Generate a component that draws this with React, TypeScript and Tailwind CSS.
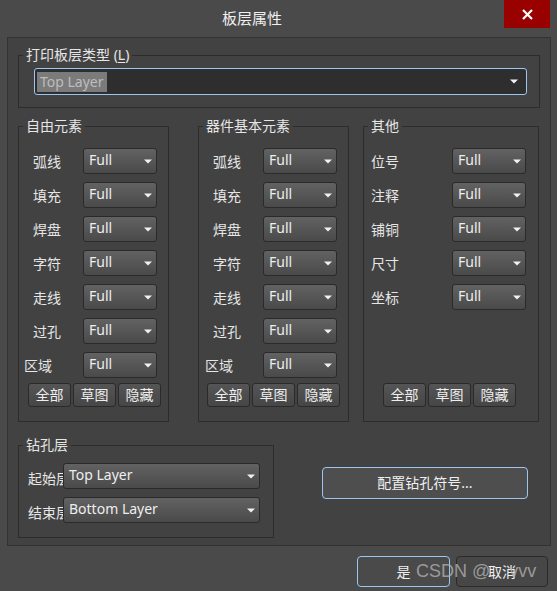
import React from "react";

function Arrow() {
  return (
    <svg width="8" height="5" viewBox="0 0 8 5" className="shrink-0">
      <path d="M0 0.5 L8 0.5 L4 4.5 Z" fill="#f2f2f2" />
    </svg>
  );
}

function Drop({ text, className = "" }: { text: string; className?: string }) {
  return (
    <div
      className={`flex items-center justify-between rounded-[3px] border border-[#2a2a2a] bg-linear-to-b from-[#626262] to-[#4a4a4a] pl-[5px] pr-[4px] text-[14px] leading-[20px] text-[#eeeeee] ${className}`}
    >
      <span className="-mt-[2px] whitespace-nowrap">{text}</span>
      <Arrow />
    </div>
  );
}

function Row({ label, labelClass }: { label: string; labelClass: string }) {
  return (
    <div className="flex h-[26px] items-center">
      <div className={`shrink-0 pt-[2px] text-[14px] leading-[20px] text-[#e6e6e6] ${labelClass}`}>{label}</div>
      <Drop text="Full" className="h-[26px] w-[74px]" />
    </div>
  );
}

function Btns({ className }: { className: string }) {
  return (
    <div className={`mt-auto flex gap-[2px] ${className}`}>
      {["全部", "草图", "隐藏"].map((t) => (
        <div
          key={t}
          className="flex h-[24px] w-[43px] items-center justify-center rounded-[3px] border border-[#2a2a2a] bg-linear-to-b from-[#555555] to-[#464646] text-[14px] leading-[20px] text-[#eeeeee]"
        >
          {t}
        </div>
      ))}
    </div>
  );
}

function Legend({ children }: { children: React.ReactNode }) {
  return (
    <legend className="ml-[4px] px-[3px] text-[14px] leading-[20px] text-[#e6e6e6]">{children}</legend>
  );
}

export default function App() {
  const rowsA = ["弧线", "填充", "焊盘", "字符", "走线", "过孔"];
  const rowsC = ["位号", "注释", "铺铜", "尺寸", "坐标"];
  return (
    <div className="relative h-[591px] w-[557px] overflow-hidden bg-[#4a4a4a] font-['Noto_Sans','Noto_Sans_CJK_SC',sans-serif] text-[#e8e8e8]">
      {/* title bar */}
      <div className="flex h-[28px]">
        <div className="flex flex-1 items-center justify-center pt-[8px] text-[15px] leading-[20px] text-[#f0f0f0]">
          板层属性
        </div>
        <div className="flex w-[46px] items-center justify-center bg-[#990000]">
          <svg width="11" height="11" viewBox="0 0 11 11">
            <path d="M1 1 L10 10 M10 1 L1 10" stroke="#ffffff" strokeWidth="2.2" />
          </svg>
        </div>
        <div className="w-[7px]" />
      </div>

      {/* main panel */}
      <div className="ml-[7px] mt-[9px] h-[509px] w-[544px] border border-[#323232] bg-[#424242] pl-[10px]">
        <fieldset className="mt-[7px] w-[522px] border border-[#2c2c2c]">
          <Legend>
            打印板层类型 (<span className="underline underline-offset-2">L</span>)
          </Legend>
          <div className="ml-[15px] mt-[3px] mb-[12px] flex h-[27px] w-[493px] items-center justify-between rounded-[3px] border border-[#9cc6f2] bg-[#2e2e2e] pl-[2px] pr-[8px]">
            <span className="bg-[#7b7b7b] px-[3px] text-[14px] leading-[20px] text-[#bdbdbd]">Top Layer</span>
            <Arrow />
          </div>
        </fieldset>

        <div className="mt-[8px] flex">
          {/* 自由元素 */}
          <fieldset className="w-[151px] shrink-0 border border-[#2c2c2c]">
            <Legend>自由元素</Legend>
            <div className="flex h-[285px] flex-col pb-[14px] pt-[12px]">
              <div className="flex flex-col gap-[8px]">
                {rowsA.map((l) => (
                  <Row key={l} label={l} labelClass="w-[64px] pl-[14px]" />
                ))}
                <Row label="区域" labelClass="w-[64px] pl-[5px]" />
              </div>
              <Btns className="pl-[9px]" />
            </div>
          </fieldset>

          {/* 器件基本元素 */}
          <fieldset className="ml-[29px] w-[151px] shrink-0 border border-[#2c2c2c]">
            <Legend>器件基本元素</Legend>
            <div className="flex h-[285px] flex-col pb-[14px] pt-[12px]">
              <div className="flex flex-col gap-[8px]">
                {rowsA.map((l) => (
                  <Row key={l} label={l} labelClass="w-[64px] pl-[14px]" />
                ))}
                <Row label="区域" labelClass="w-[64px] pl-[6px]" />
              </div>
              <Btns className="pl-[8px]" />
            </div>
          </fieldset>

          {/* 其他 */}
          <fieldset className="ml-[14px] w-[176px] shrink-0 border border-[#2c2c2c]">
            <Legend>其他</Legend>
            <div className="flex h-[285px] flex-col pb-[14px] pt-[12px]">
              <div className="flex flex-col gap-[8px]">
                {rowsC.map((l) => (
                  <Row key={l} label={l} labelClass="w-[88px] pl-[7px]" />
                ))}
              </div>
              <Btns className="pl-[19px]" />
            </div>
          </fieldset>
        </div>

        <div className="mt-[13px] flex items-start">
          <fieldset className="w-[256px] shrink-0 border border-[#2c2c2c]">
            <Legend>钻孔层</Legend>
            <div className="flex flex-col gap-[8px] pb-[14px] pt-[8px]">
              {[
                ["起始层", "Top Layer"],
                ["结束层", "Bottom Layer"],
              ].map(([l, v]) => (
                <div key={l} className="flex h-[26px] items-center">
                  <div className="w-[44px] shrink-0 overflow-hidden whitespace-nowrap pl-[9px] pt-[5px] text-[14px] leading-[20px] text-[#e6e6e6]">
                    {l}
                  </div>
                  <Drop text={v} className="h-[26px] w-[197px]" />
                </div>
              ))}
            </div>
          </fieldset>
          <div className="ml-[48px] mt-[32px] flex h-[32px] w-[206px] items-center justify-center rounded-[4px] border border-[#9cc6f2] bg-[#4e4e4e] text-[14px] leading-[20px] text-[#f0f0f0]">
            配置钻孔符号...
          </div>
        </div>
      </div>

      {/* bottom buttons */}
      <div className="mt-[10px] flex justify-end gap-[6px] pr-[9px]">
        <div className="flex h-[31px] w-[93px] items-center justify-center rounded-[4px] border border-[#9cc6f2] bg-[#4a4a4a] text-[14px] leading-[20px] text-[#f0f0f0]">
          是
        </div>
        <div className="flex h-[31px] w-[92px] items-center justify-center rounded-[4px] border border-[#2a2a2a] bg-[#474747] text-[14px] leading-[20px] text-[#f0f0f0]">
          取消
        </div>
      </div>

      {/* watermark */}
      <div className="pointer-events-none absolute left-[416px] top-[561px] flex font-['Liberation_Sans',sans-serif] text-[18px] leading-[20px] text-[#b0b0b0]/80">
        <span>CSDN @</span>
        <span className="w-[19px]" />
        <span>vvv</span>
      </div>
    </div>
  );
}
